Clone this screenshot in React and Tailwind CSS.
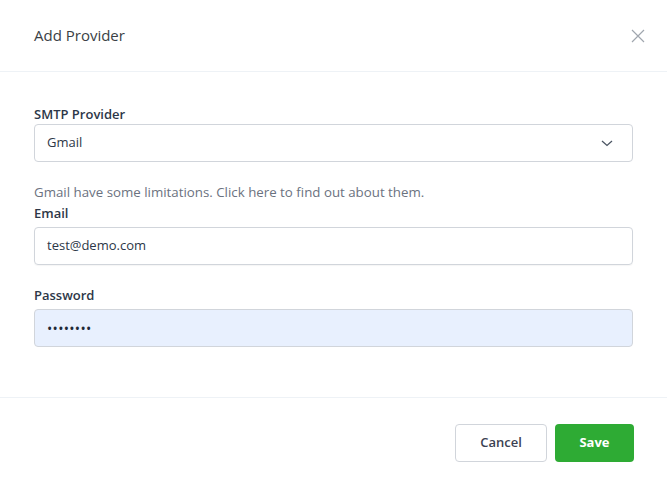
import React from 'react';

const App = () => {
  return (
    <div className="w-[667px] h-[484px] bg-white text-[#374151]" style={{ fontFamily: '"Open Sans", "Noto Sans", sans-serif' }}>
      <div className="h-[72px] flex items-center justify-between pl-[34px] pr-[22px] border-b border-[#eef2f6]">
        <h2 className="text-[15px] text-[#3b3f45]">Add Provider</h2>
        <svg width="14" height="14" viewBox="0 0 14 14" className="text-[#a0a6ae]">
          <path d="M1 1L13 13M13 1L1 13" stroke="currentColor" strokeWidth="1.2" />
        </svg>
      </div>

      <div className="px-[34px] pt-[33px] h-[326px] border-b border-[#eef2f6]">
        <label className="block text-[13px] font-semibold text-[#2d3748] leading-[18px]">SMTP Provider</label>
        <div className="mt-[1px] h-[38px] flex items-center justify-between px-[12px] border border-[#d1d5db] rounded-[4px]">
          <span className="text-[13px] text-[#2d3748]">Gmail</span>
          <svg width="14" height="14" viewBox="0 0 14 14" className="mr-[6px]">
            <path d="M2 5L7 9.5L12 5" fill="none" stroke="#4b5563" strokeWidth="1.3" />
          </svg>
        </div>

        <p className="mt-[21px] text-[13.3px] text-[#6b7280] leading-[18px]">Gmail have some limitations. Click here to find out about them.</p>
        <label className="block mt-[3px] text-[13px] font-semibold text-[#2d3748] leading-[18px]">Email</label>
        <div className="mt-[5px] h-[38px] flex items-center px-[12px] border border-[#d1d5db] rounded-[4px] shadow-[0_1px_1px_rgba(0,0,0,0.04)]">
          <span className="text-[13px] text-[#2d3748]">test@demo.com</span>
        </div>

        <label className="block mt-[21px] text-[13px] font-semibold text-[#2d3748] leading-[18px]">Password</label>
        <div className="mt-[5px] h-[38px] flex items-center px-[12px] border border-[#d1d5db] rounded-[4px] bg-[#e8f0fe]">
          <span className="text-[14px] text-[#1f2937] tracking-[0.3px]">••••••••</span>
        </div>
      </div>

      <div className="flex justify-end gap-[8px] px-[33px] pt-[26px]">
        <button className="w-[92px] h-[38px] border border-[#d1d5db] rounded-[4px] bg-white text-[13px] font-semibold text-[#3b4252]">Cancel</button>
        <button className="w-[79px] h-[38px] rounded-[4px] bg-[#2eab34] text-[13px] font-bold text-white">Save</button>
      </div>
    </div>
  );
};

export default App;
